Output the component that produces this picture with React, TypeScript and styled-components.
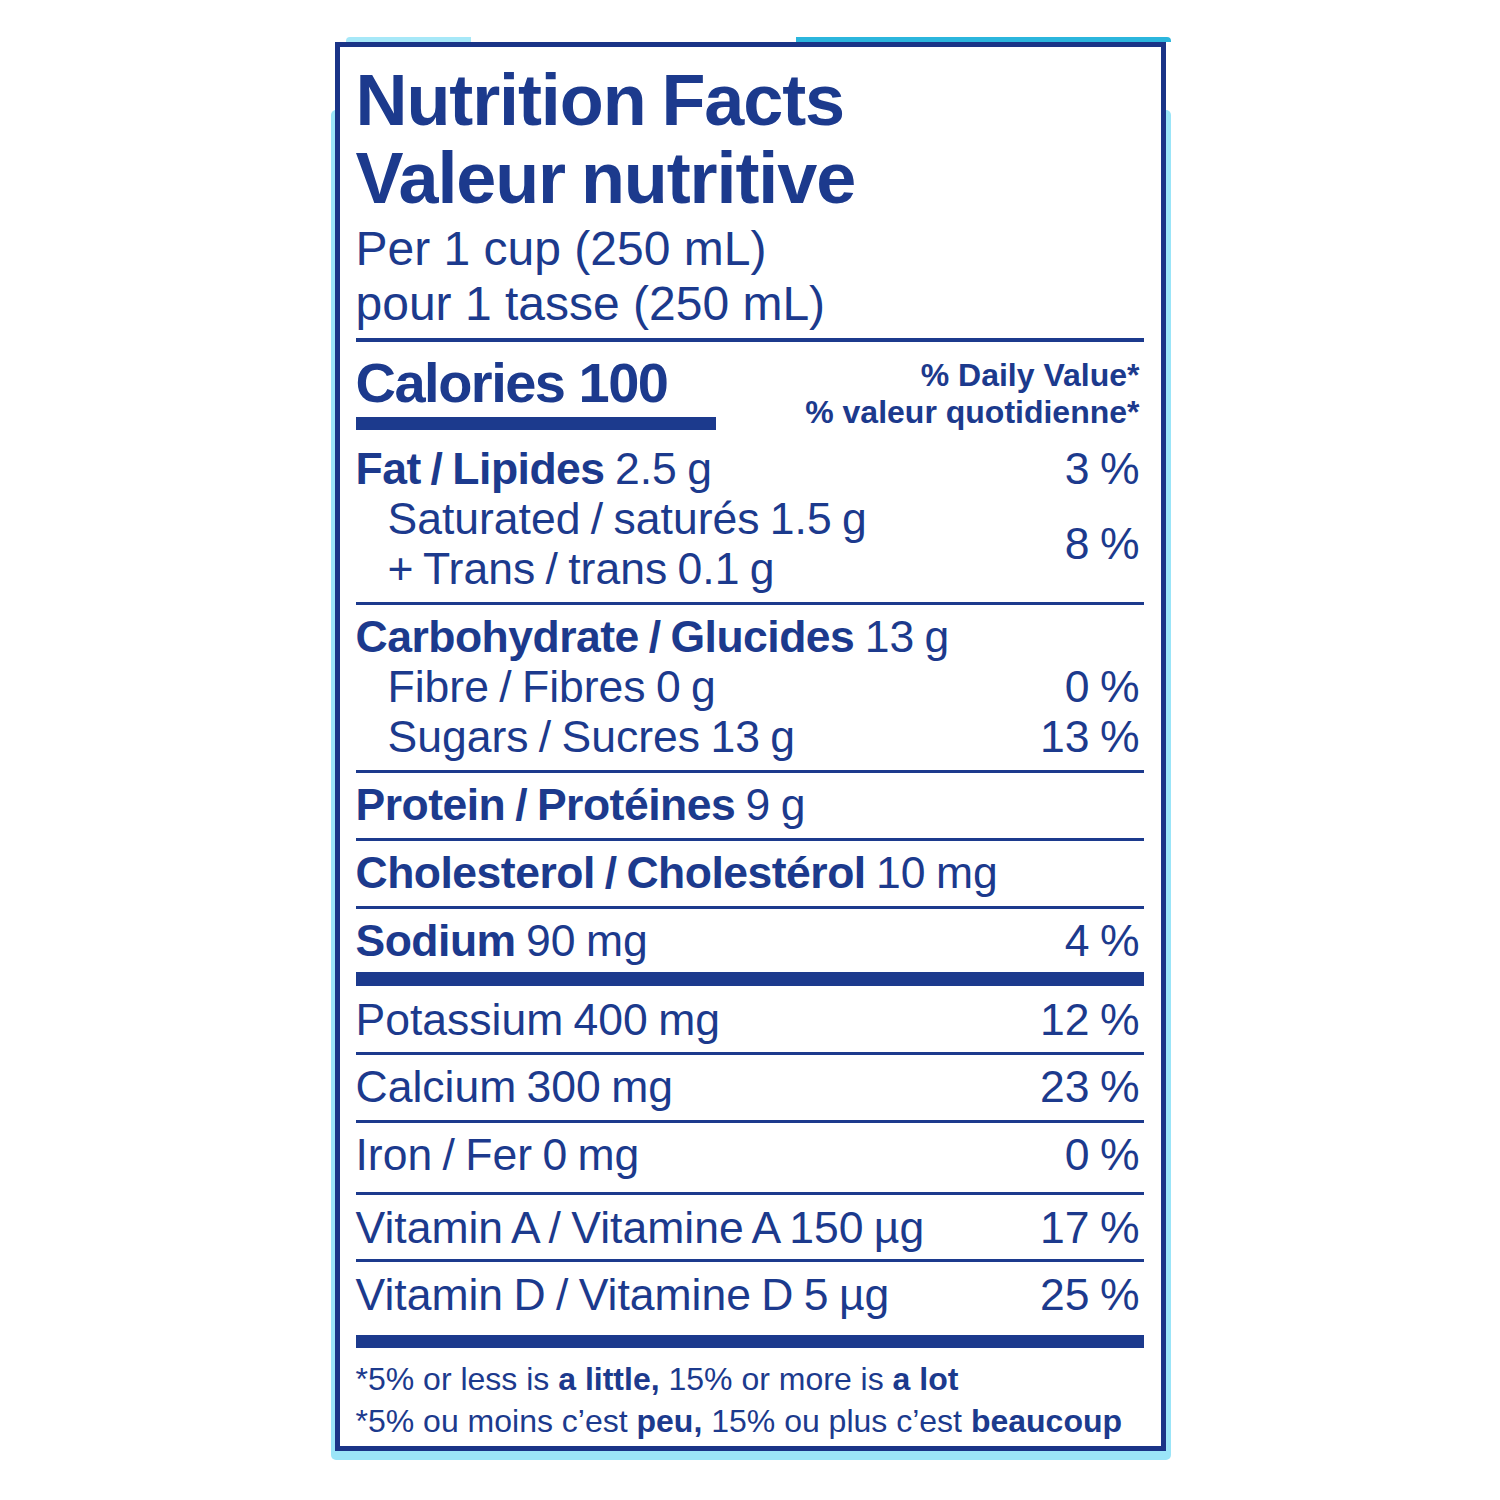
import React from "react";
import styled, {createGlobalStyle} from "styled-components";

const navy = '#1c3a8d'

const GlobalStyle = createGlobalStyle`
  body {
    margin: 0;
    background: #fff;
    font-family: "Liberation Sans", Arial, sans-serif;
    color: ${navy};
  }
`

const Page = styled.div`
  padding: 42px 0;
  display: flex;
  justify-content: center;
`

const Frame = styled.div`
  position: relative;
  box-sizing: border-box;
  width: 831px;
  border: 5px solid #1a3487;
  background: #fff;
  padding: 0 17px 0 16px;

  &::before {
    content: '';
    position: absolute;
    left: -9px;
    right: -10px;
    top: 63px;
    bottom: -14px;
    background: #9be5f8;
    border-radius: 5px;
    z-index: -1;
  }

  &::after {
    content: '';
    position: absolute;
    top: -10px;
    left: 6px;
    right: -10px;
    height: 5px;
    border-radius: 4px 4px 0 0;
    background: linear-gradient(to right, #a6e8f8 0, #a6e8f8 125px, transparent 125px, transparent 450px, #2bb6dd 450px);
  }
`

const Title = styled.h1`
  margin: 0;
  padding-top: 14px;
  font-size: 72px;
  line-height: 78px;
  font-weight: 700;
  letter-spacing: -1.1px;
  word-spacing: -3px;
`

const Serving = styled.div`
  margin-top: 4px;
  font-size: 48px;
  line-height: 55px;
`

const HeadRule = styled.div`
  margin-top: 7px;
  height: 4px;
  background: ${navy};
`

const CaloriesRow = styled.div`
  display: flex;
  justify-content: space-between;
  align-items: flex-start;
`

const Calories = styled.div`
  margin-top: 11px;
  font-size: 56px;
  line-height: 60px;
  font-weight: 700;
  letter-spacing: -1.5px;
`

const CalBar = styled.div`
  width: 360px;
  height: 13px;
  margin-top: 4px;
  background: ${navy};
`

const DailyValue = styled.div`
  padding-top: 15px;
  padding-right: 4px;
  text-align: right;
  font-size: 32px;
  line-height: 37px;
  font-weight: 700;
`

const Section = styled.div<{ $rule: number; $pt: number; $pb: number }>`
  border-top: ${p => p.$rule}px solid ${navy};
  padding-top: ${p => p.$pt}px;
  padding-bottom: ${p => p.$pb}px;
`

const Row = styled.div<{ $sub?: boolean }>`
  display: flex;
  justify-content: space-between;
  align-items: center;
  font-size: 44.5px;
  line-height: 50px;
  word-spacing: -2px;
  padding-left: ${p => p.$sub ? 32 : 0}px;
  padding-right: 4px;

  b {
    font-weight: 700;
    letter-spacing: -0.5px;
  }
`

const Lines = styled.div`
  display: flex;
  flex-direction: column;
`

const Footnote = styled.div`
  font-size: 32px;
  line-height: 42px;

  b {
    font-weight: 700;
  }
`

type Nutrient = { text: string; dv: string; rule: number; pt: number; pb: number }

const lower: Nutrient[] = [
    {text: 'Potassium 400 mg', dv: '12 %', rule: 14, pt: 9, pb: 7},
    {text: 'Calcium 300 mg', dv: '23 %', rule: 3, pt: 7, pb: 8},
    {text: 'Iron / Fer 0 mg', dv: '0 %', rule: 3, pt: 7, pb: 12},
    {text: 'Vitamin A / Vitamine A 150 µg', dv: '17 %', rule: 3, pt: 8, pb: 6},
    {text: 'Vitamin D / Vitamine D 5 µg', dv: '25 %', rule: 3, pt: 8, pb: 15},
]

function App() {
    return (
        <Page>
            <GlobalStyle/>
            <Frame>
                <Title>Nutrition Facts<br/>Valeur nutritive</Title>
                <Serving>Per 1 cup (250 mL)<br/>pour 1 tasse (250 mL)</Serving>
                <HeadRule/>
                <CaloriesRow>
                    <div>
                        <Calories>Calories 100</Calories>
                        <CalBar/>
                    </div>
                    <DailyValue>% Daily Value*<br/>% valeur quotidienne*</DailyValue>
                </CaloriesRow>

                <Section $rule={0} $pt={13} $pb={8}>
                    <Row><span><b>Fat / Lipides</b> 2.5 g</span><span>3 %</span></Row>
                    <Row $sub>
                        <Lines>
                            <span>Saturated / saturés 1.5 g</span>
                            <span>+ Trans / trans 0.1 g</span>
                        </Lines>
                        <span>8 %</span>
                    </Row>
                </Section>

                <Section $rule={3} $pt={7} $pb={8}>
                    <Row><span><b>Carbohydrate / Glucides</b> 13 g</span></Row>
                    <Row $sub><span>Fibre / Fibres 0 g</span><span>0 %</span></Row>
                    <Row $sub><span>Sugars / Sucres 13 g</span><span>13 %</span></Row>
                </Section>

                <Section $rule={3} $pt={7} $pb={8}>
                    <Row><span><b>Protein / Protéines</b> 9 g</span></Row>
                </Section>
                <Section $rule={3} $pt={7} $pb={8}>
                    <Row><span><b>Cholesterol / Cholestérol</b> 10 mg</span></Row>
                </Section>
                <Section $rule={3} $pt={7} $pb={6}>
                    <Row><span><b>Sodium</b> 90 mg</span><span>4 %</span></Row>
                </Section>

                {lower.map(n =>
                    <Section key={n.text} $rule={n.rule} $pt={n.pt} $pb={n.pb}>
                        <Row><span>{n.text}</span><span>{n.dv}</span></Row>
                    </Section>
                )}

                <Section $rule={13} $pt={10} $pb={4}>
                    <Footnote>
                        *5% or less is <b>a little,</b> 15% or more is <b>a lot</b><br/>
                        *5% ou moins c’est <b>peu,</b> 15% ou plus c’est <b>beaucoup</b>
                    </Footnote>
                </Section>
            </Frame>
        </Page>
    )
}

export default App;
